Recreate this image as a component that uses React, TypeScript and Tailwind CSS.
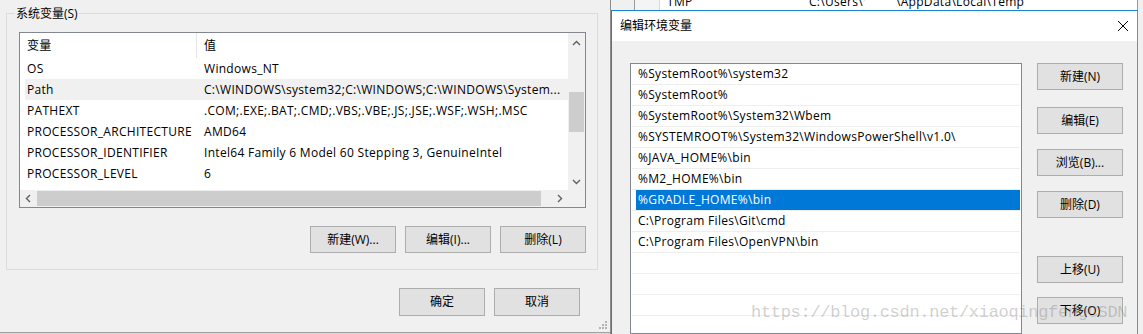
import React from "react";

const sysVars = [
  { name: "OS", value: "Windows_NT" },
  { name: "Path", value: "C:\\WINDOWS\\system32;C:\\WINDOWS;C:\\WINDOWS\\System...", active: true },
  { name: "PATHEXT", value: ".COM;.EXE;.BAT;.CMD;.VBS;.VBE;.JS;.JSE;.WSF;.WSH;.MSC" },
  { name: "PROCESSOR_ARCHITECTURE", value: "AMD64" },
  { name: "PROCESSOR_IDENTIFIER", value: "Intel64 Family 6 Model 60 Stepping 3, GenuineIntel" },
  { name: "PROCESSOR_LEVEL", value: "6" },
];

const pathEntries = [
  "%SystemRoot%\\system32",
  "%SystemRoot%",
  "%SystemRoot%\\System32\\Wbem",
  "%SYSTEMROOT%\\System32\\WindowsPowerShell\\v1.0\\",
  "%JAVA_HOME%\\bin",
  "%M2_HOME%\\bin",
  "%GRADLE_HOME%\\bin",
  "C:\\Program Files\\Git\\cmd",
  "C:\\Program Files\\OpenVPN\\bin",
  "",
  "",
  "",
  "",
  "",
  "",
];

function Chevron({ dir }: { dir: "up" | "down" | "left" | "right" }) {
  const pts = {
    up: "1,6 4.5,2.5 8,6",
    down: "1,3 4.5,6.5 8,3",
    left: "6,1 2.5,4.5 6,8",
    right: "3,1 6.5,4.5 3,8",
  }[dir];
  return (
    <svg width="9" height="9" viewBox="0 0 9 9">
      <polyline points={pts} fill="none" stroke="#606060" strokeWidth="1.4" />
    </svg>
  );
}

function Btn({ label, className = "" }: { label: string; className?: string }) {
  return (
    <div
      className={`h-[27px] w-[86px] flex items-center justify-center border border-[#adadad] bg-[#e1e1e1] text-[12px] text-black ${className}`}
    >
      {label}
    </div>
  );
}

function SystemVariables() {
  return (
    <div className="relative w-[611px] h-[334px] border-r border-[#8c8c8c] flex flex-col">
      <div className="pt-[13px] pl-[6px]">
        <div className="relative w-[592px] h-[257px] border border-[#dcdcdc] pt-[18px] pl-[12px]">
          <span className="absolute left-[8px] -top-[8px] px-[1px] leading-[16px] bg-[#f0f0f0]">
            系统变量(S)
          </span>

          <div className="w-[567px] h-[176px] border border-[#828790] bg-white flex flex-col">
            <div className="flex h-[157px]">
              <div className="w-[548px] flex flex-col tracking-[0.3px]">
                <div className="h-[25px] flex items-center ml-[5px]">
                  <div className="w-[172px] h-full pl-[2px] flex items-center border-r border-[#e5e5e5]">变量</div>
                  <div className="pl-[7px]">值</div>
                </div>
                {sysVars.map((v) => (
                  <div
                    key={v.name}
                    className={`h-[21px] ml-[5px] flex items-center whitespace-nowrap ${v.active ? "bg-[#f0f0f0]" : ""}`}
                  >
                    <div className="w-[172px] pl-[2px]">{v.name}</div>
                    <div className="pl-[7px] overflow-hidden">{v.value}</div>
                  </div>
                ))}
              </div>
              <div className="w-[17px] bg-[#f0f0f0] flex flex-col">
                <div className="h-[17px] flex items-center justify-center pt-[3px]">
                  <Chevron dir="up" />
                </div>
                <div className="mt-[42px] mx-[1px] h-[40px] bg-[#cdcdcd]" />
                <div className="flex-1" />
                <div className="h-[17px] flex items-center justify-center">
                  <Chevron dir="down" />
                </div>
              </div>
            </div>
            <div className="flex-1" />
            <div className="flex h-[17px]">
              <div className="w-[548px] bg-[#f0f0f0] flex items-center">
                <div className="w-[17px] h-full flex items-center justify-center">
                  <Chevron dir="left" />
                </div>
                <div className="w-[504px] h-[15px] bg-[#cdcdcd]" />
                <div className="flex-1" />
                <div className="w-[17px] h-full flex items-center justify-center">
                  <Chevron dir="right" />
                </div>
              </div>
              <div className="w-[17px] bg-[#f0f0f0]" />
            </div>
          </div>

          <div className="w-[567px] mt-[18px] flex justify-end gap-[9px]">
            <Btn label="新建(W)..." />
            <Btn label="编辑(I)..." />
            <Btn label="删除(L)" />
          </div>
        </div>
      </div>

      <div className="mt-[18px] pr-[30px] flex justify-end gap-[9px]">
        <Btn label="确定" className="h-[28px]" />
        <Btn label="取消" className="h-[28px]" />
      </div>

      <div className="flex-1" />
      <div className="h-[2px] border-t border-[#a0a0a0] bg-[#dadada]" />

      <svg className="absolute right-[3px] bottom-[5px]" width="8" height="8" viewBox="0 0 8 8">
        {[
          [6, 0],
          [3, 3],
          [6, 3],
          [0, 6],
          [3, 6],
          [6, 6],
        ].map(([x, y]) => (
          <rect key={`${x}-${y}`} x={x} y={y} width="2" height="2" fill="#b4b4b4" />
        ))}
      </svg>
    </div>
  );
}

function EditPathDialog() {
  return (
    <div className="flex-1 flex flex-col">
      {/* window behind the dialog */}
      <div className="h-[10px] overflow-hidden flex">
        <div className="w-[24px] bg-[#f0f0f0] border-r border-[#9a9a9a]" />
        <div className="w-[25px] bg-[#f4f4f4] border-r border-[#dadada]" />
        <div className="flex-1 bg-white">
          <div className="-mt-[9px] h-[21px] pl-[7px] flex items-center whitespace-nowrap tracking-[0.3px]">
            <span className="w-[142px]">TMP</span>
            <span className="w-[87px]">C:\Users\'</span>
            <span>\AppData\Local\Temp</span>
          </div>
        </div>
        <div className="w-[6px] bg-[#f0f0f0] border-l border-[#9a9a9a]" />
      </div>

      <div className="flex-1 flex min-h-0">
        <div className="w-[527px] border-l border-t border-r border-l-[#1883d7] border-t-[#1883d7] border-r-[#8a8a8a] flex flex-col">
          <div className="h-[30px] bg-white flex items-center justify-between pl-[8px] pr-[9px]">
            <span>编辑环境变量</span>
            <svg width="10" height="10" viewBox="0 0 10 10">
              <path d="M0 0 L10 10 M10 0 L0 10" stroke="#000" strokeWidth="1" />
            </svg>
          </div>
          <div className="flex-1 flex pt-[22px] pl-[18px] min-h-0">
            <div className="w-[392px] border border-[#828790] bg-white px-[1px] overflow-hidden tracking-[0.3px]">
              {pathEntries.map((p, i) => (
                <div key={i} className="h-[21px] border-b border-[#eeeeee] flex">
                  <div
                    className={`flex-1 ml-[4px] pl-[2px] flex items-center whitespace-nowrap ${
                      i === 6 ? "bg-[#0078d7] text-white" : ""
                    }`}
                  >
                    {p}
                  </div>
                </div>
              ))}
            </div>
            <div className="ml-[15px] flex flex-col">
              <Btn label="新建(N)" className="w-[85px]" />
              <Btn label="编辑(E)" className="w-[85px] mt-[17px]" />
              <Btn label="浏览(B)..." className="w-[85px] mt-[15px]" />
              <Btn label="删除(D)" className="w-[85px] mt-[15px]" />
              <Btn label="上移(U)" className="w-[85px] mt-[38px]" />
              <Btn label="下移(O)" className="w-[85px] mt-[14px]" />
            </div>
          </div>
        </div>
        <div className="flex-1 bg-[#f0f0f0]" />
      </div>
    </div>
  );
}

export default function App() {
  return (
    <div className="relative w-[1143px] h-[334px] overflow-hidden bg-[#f0f0f0] flex text-[12px] text-black font-['Open_Sans','Noto_Sans_CJK_SC',sans-serif]">
      <SystemVariables />
      <EditPathDialog />
      <div className="absolute left-[751px] top-[301px] text-[17px] leading-[24px] whitespace-nowrap text-[rgba(120,120,120,0.35)] font-['Liberation_Mono',monospace] tracking-[-0.3px] pointer-events-none">
        https://blog.csdn.net/xiaoqingfengCSDN
      </div>
    </div>
  );
}
